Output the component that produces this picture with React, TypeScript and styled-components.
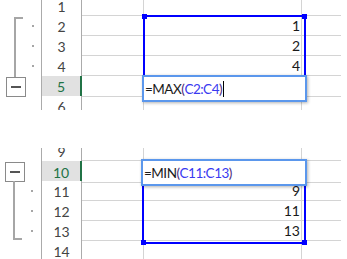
import React from "react";
import styled, { createGlobalStyle } from "styled-components";

const GlobalStyle = createGlobalStyle`
  body {
    margin: 0;
    background: #fff;
    font-family: Lato, "Liberation Sans", sans-serif;
  }
`;

const Page = styled.main`
  display: flex;
  flex-direction: column;
  gap: 38px;
  width: 347px;
  height: 259px;
  overflow: hidden;
`;

const Sheet = styled.section<{ $height: number }>`
  position: relative;
  width: 341px;
  height: ${({ $height }) => $height}px;
  overflow: hidden;
`;

const Rows = styled.div<{ $offset: number }>`
  display: flex;
  flex-direction: column;
  margin-top: ${({ $offset }) => -$offset}px;
`;

const Row = styled.div`
  display: grid;
  grid-template-columns: 41px 41px 62px 158px 39px;
  height: 20px;
`;

const Gutter = styled.div<{ $inset: number }>`
  display: flex;
  padding-left: ${({ $inset }) => $inset}px;
`;

const BracketSlot = styled.div`
  width: 24px;
  display: flex;
  flex-direction: column;
`;

const DotSlot = styled.div`
  display: flex;
  align-items: center;
`;

const Dot = styled.span`
  width: 2px;
  height: 2px;
  margin-left: 7px;
  background: #a6a6a6;
`;

const BracketStart = styled.div`
  flex: 1;
  width: 7px;
  margin: 1px 0 0 13px;
  border-left: 2px solid #a6a6a6;
  border-top: 2px solid #a6a6a6;
`;

const BracketMid = styled.div`
  flex: 1;
  width: 2px;
  margin-left: 13px;
  background: #a6a6a6;
`;

const BracketEnd = styled.div`
  flex: 1;
  width: 7px;
  margin: 0 0 1px 13px;
  border-left: 2px solid #a6a6a6;
  border-bottom: 2px solid #a6a6a6;
`;

const Stub = styled.div<{ $on: boolean }>`
  width: 2px;
  height: 1px;
  margin-left: 13px;
  background: ${({ $on }) => ($on ? "#a6a6a6" : "transparent")};
`;

const Toggle = styled.div`
  width: 18px;
  height: 18px;
  margin-left: 5px;
  border: 1px solid #8a8a8a;
  background: #fff;
  display: flex;
  align-items: center;
  justify-content: center;

  &::after {
    content: "";
    width: 10px;
    height: 2px;
    background: #555;
  }
`;

const Header = styled.div<{ $active?: boolean }>`
  border-left: 1px solid #ababab;
  border-right: ${({ $active }) =>
    $active ? "2px solid #217346" : "1px solid #ababab"};
  background: ${({ $active }) => ($active ? "#e1e1e1" : "#fff")};
  color: ${({ $active }) => ($active ? "#217346" : "#444")};
  font-size: 14px;
  display: flex;
  align-items: center;
  justify-content: center;
`;

const Cell = styled.div<{ $last?: boolean }>`
  border-bottom: 1px solid #d4d4d4;
  border-right: ${({ $last }) => ($last ? "none" : "1px solid #d4d4d4")};
  padding-right: 1px;
  color: #1a1a1a;
  font-size: 14px;
  display: flex;
  align-items: center;
  justify-content: flex-end;
`;

type Box = { $x: number; $y: number; $w: number; $h: number };

const Selection = styled.div<Box>`
  position: absolute;
  left: ${({ $x }) => $x}px;
  top: ${({ $y }) => $y}px;
  width: ${({ $w }) => $w}px;
  height: ${({ $h }) => $h}px;
  border: 2px solid #0000ff;
  z-index: 1;
`;

const Handle = styled.span<{ $v: "top" | "bottom"; $s: "left" | "right" }>`
  position: absolute;
  ${({ $v }) => $v}: -3px;
  ${({ $s }) => $s}: -3px;
  width: 5px;
  height: 5px;
  background: #0000ff;
`;

const FillHandle = styled.span<{ $x: number; $y: number }>`
  position: absolute;
  left: ${({ $x }) => $x}px;
  top: ${({ $y }) => $y}px;
  width: 5px;
  height: 5px;
  background: #217346;
  z-index: 1;
`;

const Editor = styled.div<Box>`
  position: absolute;
  left: ${({ $x }) => $x}px;
  top: ${({ $y }) => $y}px;
  width: ${({ $w }) => $w}px;
  height: ${({ $h }) => $h}px;
  border: 2px solid #5b97ec;
  background: #fff;
  box-shadow: 1px 1px 3px rgba(0, 0, 0, 0.3);
  padding-left: 1px;
  color: #1a1a1a;
  font-size: 13.5px;
  letter-spacing: -0.5px;
  display: flex;
  align-items: center;
  z-index: 2;
`;

const Ref = styled.span`
  color: #3a3af0;
`;

const Paren = styled.span`
  color: #4a2a7a;
`;

const Caret = styled.span`
  display: inline-block;
  width: 1px;
  height: 16px;
  margin-left: 1px;
  background: #000;
`;

type Bracket = "start" | "mid" | "end" | "toggleTop" | "toggleBottom";

type RowData = {
  n: number;
  value?: string;
  active?: boolean;
  bracket?: Bracket;
  dot?: boolean;
};

const topRows: RowData[] = [
  { n: 1 },
  { n: 2, value: "1", bracket: "start", dot: true },
  { n: 3, value: "2", bracket: "mid", dot: true },
  { n: 4, value: "4", bracket: "mid", dot: true },
  { n: 5, active: true, bracket: "toggleTop" },
  { n: 6 },
];

const bottomRows: RowData[] = [
  { n: 9 },
  { n: 10, active: true, bracket: "toggleBottom" },
  { n: 11, value: "9", bracket: "mid", dot: true },
  { n: 12, value: "11", bracket: "mid", dot: true },
  { n: 13, value: "13", bracket: "end", dot: true },
  { n: 14 },
];

const BracketPiece = ({ kind }: { kind?: Bracket }) => {
  if (kind === "start") return <BracketStart />;
  if (kind === "mid") return <BracketMid />;
  if (kind === "end") return <BracketEnd />;
  if (kind === "toggleTop")
    return (
      <>
        <Stub $on />
        <Toggle />
      </>
    );
  if (kind === "toggleBottom")
    return (
      <>
        <Stub $on={false} />
        <Toggle />
        <Stub $on />
      </>
    );
  return null;
};

const SheetRows = ({ rows, inset }: { rows: RowData[]; inset: number }) => (
  <>
    {rows.map((r) => (
      <Row key={r.n}>
        <Gutter $inset={inset}>
          <BracketSlot>
            <BracketPiece kind={r.bracket} />
          </BracketSlot>
          <DotSlot>{r.dot && <Dot />}</DotSlot>
        </Gutter>
        <Header $active={r.active}>{r.n}</Header>
        <Cell />
        <Cell>{r.value}</Cell>
        <Cell $last />
      </Row>
    ))}
  </>
);

const App = () => (
  <>
    <GlobalStyle />
    <Page>
      <Sheet $height={110}>
        <Rows $offset={4}>
          <SheetRows rows={topRows} inset={1} />
        </Rows>
        <Selection $x={143} $y={15} $w={159} $h={60}>
          <Handle $v="top" $s="left" />
          <Handle $v="top" $s="right" />
          <Handle $v="bottom" $s="left" />
          <Handle $v="bottom" $s="right" />
        </Selection>
        <FillHandle $x={299} $y={92} />
        <Editor $x={142} $y={75} $w={160} $h={23}>
          =MAX<Paren>(</Paren>
          <Ref>C2:C4</Ref>
          <Paren>)</Paren>
          <Caret />
        </Editor>
      </Sheet>
      <Sheet $height={111}>
        <Rows $offset={7}>
          <SheetRows rows={bottomRows} inset={0} />
        </Rows>
        <Selection $x={142} $y={32} $w={160} $h={60}>
          <Handle $v="top" $s="left" />
          <Handle $v="top" $s="right" />
          <Handle $v="bottom" $s="left" />
          <Handle $v="bottom" $s="right" />
        </Selection>
        <FillHandle $x={299} $y={30} />
        <Editor $x={141} $y={11} $w={161} $h={23}>
          =MIN<Paren>(</Paren>
          <Ref>C11:C13</Ref>
          <Paren>)</Paren>
        </Editor>
      </Sheet>
    </Page>
  </>
);

export default App;
